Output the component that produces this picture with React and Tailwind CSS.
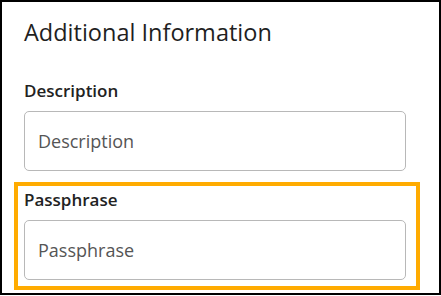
import React from 'react';

const Field = ({ label, placeholder }) => (
    <div className="flex flex-col">
        <label className="text-[17px] font-semibold text-[#222] leading-[22px]">{label}</label>
        <input
            placeholder={placeholder}
            className="mt-[9px] h-[60px] w-[382px] rounded-[5px] border border-[#b8b8b8] bg-white px-[13px] text-[18px] text-[#333] placeholder:text-[#555] outline-none"
        />
    </div>
);

export default function App() {
    return (
        <div className="bg-white w-[441px] h-[296px]" style={{ fontFamily: '"Open Sans", sans-serif' }}>
            <div className="h-[295px] border-2 border-black pl-[22px] pt-[14px]">
                <h2 className="text-[23.5px] leading-[32px] text-[#1f1f1f]">Additional Information</h2>
                <div className="mt-[32px]">
                    <Field label="Description" placeholder="Description" />
                </div>
                <div className="mt-[11px] -ml-[10px] w-[406px] border-4 border-[#ffab00] pl-[6px] pt-[3px] pb-[6px]">
                    <Field label="Passphrase" placeholder="Passphrase" />
                </div>
            </div>
        </div>
    );
}
